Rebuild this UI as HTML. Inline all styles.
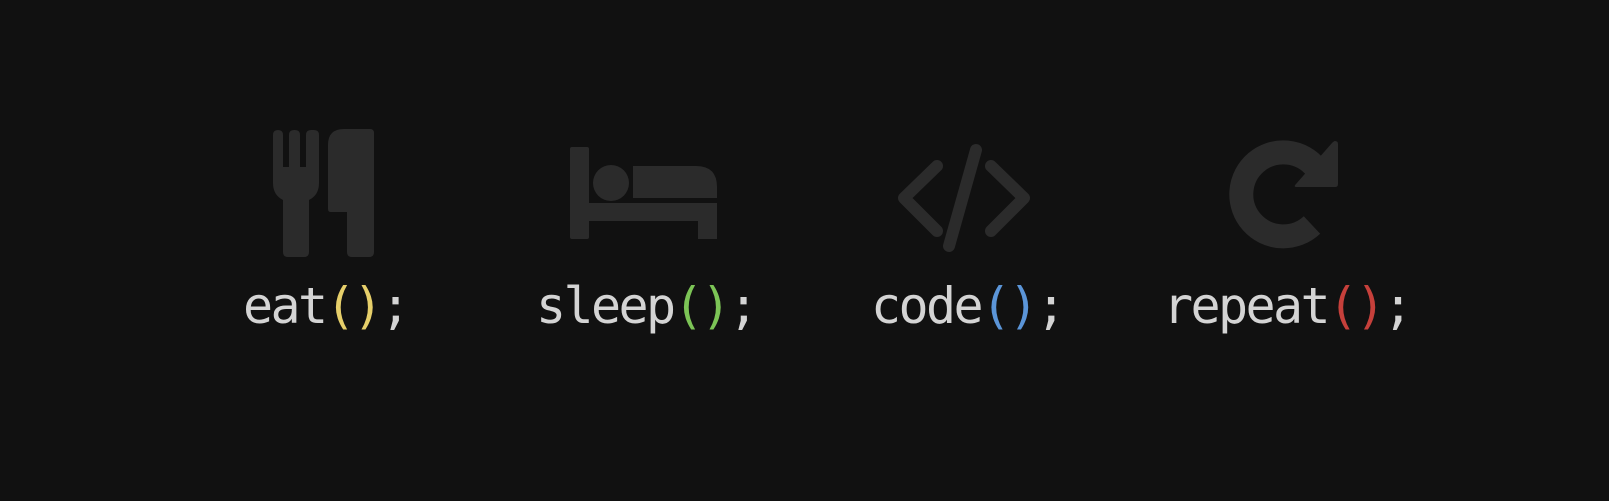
<!DOCTYPE html>
<html><head><meta charset="utf-8"><style>
html,body{margin:0;padding:0;background:#111111;width:1609px;height:501px;overflow:hidden}
.t{position:absolute;top:0;font-family:"DejaVu Sans Mono","Liberation Mono",monospace;font-size:50px;letter-spacing:-2.6px;color:#d4d4d4;line-height:1;white-space:pre}
</style></head><body>
<svg width="1609" height="501" style="position:absolute;left:0;top:0" fill="#2b2b2b">
<!-- fork -->
<path d="M273 135 q0-5 5-5 q5 0 5 5 v32 h6 v-32 q0-5 5-5 h1 q5 0 5 5 v32 h6 v-32 q0-5 5-5 h3 q5 0 5 5 v48 q0 12 -10 17 v52 q0 5 -5 5 h-16 q-5 0 -5 -5 v-52 q-10 -5 -10 -17 z"/>
<!-- knife -->
<path d="M344 129 h26 q4 0 4 4 v119 q0 5 -5 5 h-17 q-5 0 -5 -5 v-40 h-16 q-3 0 -3 -3 v-64 q0-16 16-16 z"/>
<!-- bed -->
<rect x="570" y="147" width="19" height="92" rx="2"/>
<circle cx="611" cy="183" r="18"/>
<path d="M633 166 h63 q21 0 21 21 v11 h-84 z"/>
<path d="M589 203 h128 v36 h-19 v-18 h-109 z"/>
<!-- code -->
<g stroke="#2b2b2b" stroke-width="12" stroke-linecap="round" stroke-linejoin="round" fill="none">
<path d="M937 166 L904 198 L937 231"/>
<path d="M991 166 L1024 198 L991 231"/>
<path d="M976 150 L949 246"/>
</g>
<!-- repeat -->
<path d="M1316 168 A42 42 0 1 0 1312 225" fill="none" stroke="#2b2b2b" stroke-width="24"/>
<path d="M1335 141 q3 0 3 3 v40 q0 3 -3 3 h-38 q-4 0 -1 -3 l36 -41 q2 -2 3 -2 z"/>
</svg>
<div class="t" style="left:243px;top:281px">eat<span style="color:#e6cf6a">()</span>;</div>
<div class="t" style="left:536px;top:281px">sleep<span style="color:#7cc456">()</span>;</div>
<div class="t" style="left:871px;top:281px">code<span style="color:#5b95d8">()</span>;</div>
<div class="t" style="left:1163px;top:281px">repeat<span style="color:#c6403b">()</span>;</div>
</body></html>
